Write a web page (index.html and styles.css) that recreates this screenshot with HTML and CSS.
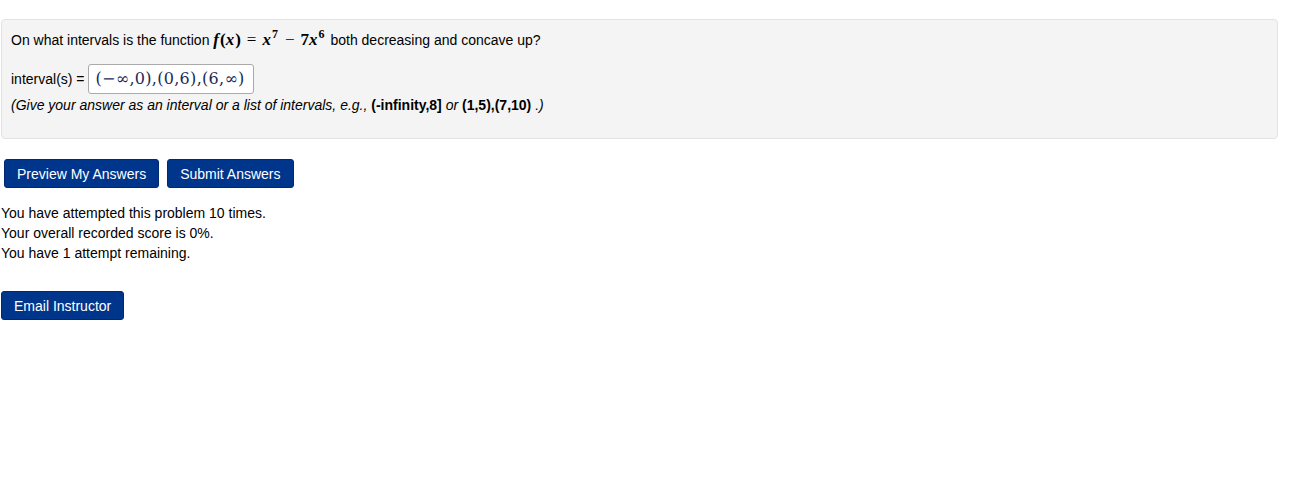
FILE: index.html
```html
<!DOCTYPE html>
<html>
<head>
<meta charset="utf-8">
<link rel="stylesheet" href="styles.css">
</head>
<body>
<div class="page">
  <div class="problem">
    <p class="question">On what intervals is the function <span class="math"><i>f</i>(<i>x</i>)<span class="op">=</span><i>x</i><sup>7</sup><span class="op">−</span>7<i>x</i><sup>6</sup></span> both decreasing and concave up?</p>
    <div class="answer-row">
      <span class="label">interval(s) =</span>
      <span class="answer"><span class="amath">(−∞,0),(0,6),(6,∞)</span></span>
    </div>
    <p class="hint">(Give your answer as an interval or a list of intervals, e.g., <b>(-infinity,8]</b> or <b>(1,5),(7,10)</b> .)</p>
  </div>
  <div class="buttons">
    <button class="btn">Preview My Answers</button>
    <button class="btn">Submit Answers</button>
  </div>
  <div class="status">
    <div>You have attempted this problem 10 times.</div>
    <div>Your overall recorded score is 0%.</div>
    <div>You have 1 attempt remaining.</div>
  </div>
  <div class="email">
    <button class="btn btn-email">Email Instructor</button>
  </div>
</div>
</body>
</html>
```
FILE: styles.css
```css
html, body {
  margin: 0;
  padding: 0;
  background: #fff;
}
body {
  font-family: "Liberation Sans", Arial, sans-serif;
  font-size: 14px;
  color: #000;
  line-height: 20px;
}
.page {
  padding: 19px 20px 0 1px;
}
.problem {
  background: #f4f4f4;
  border: 1px solid #e3e3e3;
  border-radius: 4px;
  padding: 9px 9px 0 9px;
  height: 109px;
}
.question {
  margin: 0;
  line-height: 22px;
}
.math {
  font-family: "Liberation Serif", "Times New Roman", serif;
  font-size: 17px;
  font-weight: bold;
  margin-right: 1px;
}
.math i {
  font-style: italic;
  margin-right: 1px;
}
.math .op {
  font-weight: normal;
  margin: 0 6px;
}
.math sup {
  font-size: 12px;
  line-height: 0;
  vertical-align: 7px;
  margin-right: 1px;
}
.answer-row {
  display: flex;
  align-items: center;
  margin-top: 13px;
  gap: 3px;
}
.answer {
  display: inline-flex;
  align-items: center;
  height: 28px;
  padding: 0 8px 0 7px;
  border: 1px solid #aaa;
  border-radius: 3px;
  background: #fff;
}
.amath {
  font-family: "DejaVu Serif", "Liberation Serif", serif;
  font-size: 16px;
  color: #1b2a5a;
  letter-spacing: 0.3px;
}
.hint {
  margin: 0;
  margin-top: 1px;
  font-style: italic;
}
.hint b {
  font-style: normal;
}
.buttons {
  display: flex;
  gap: 8px;
  margin-top: 20px;
  margin-left: 3px;
}
.btn {
  font-family: "Liberation Sans", Arial, sans-serif;
  font-size: 14px;
  color: #fff;
  background: #00358c;
  border: 1px solid #002a70;
  border-radius: 3px;
  height: 29px;
  padding: 0 12px;
  margin: 0;
}
.status {
  margin-top: 15px;
}
.email {
  margin-top: 28px;
}
```
